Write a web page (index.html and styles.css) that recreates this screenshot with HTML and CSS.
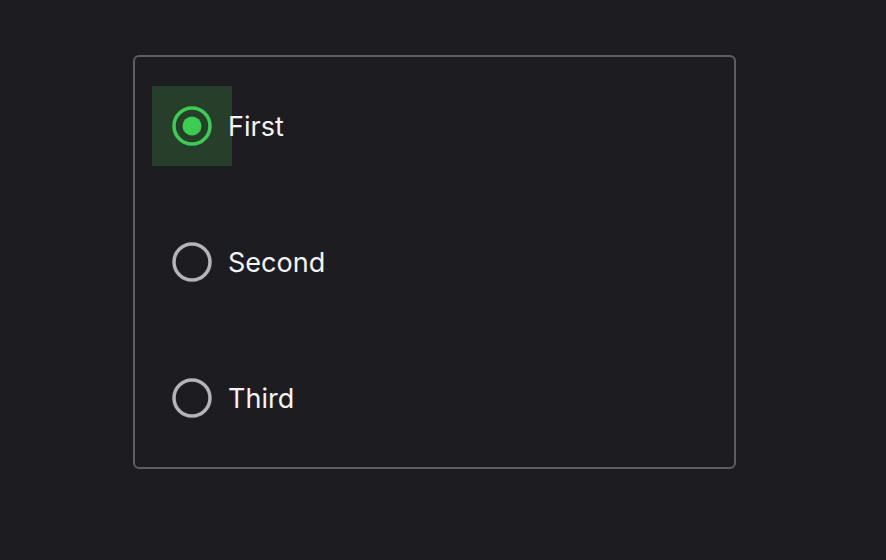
FILE: index.html
```html
<!DOCTYPE html>
<html>
<head>
<meta charset="utf-8">
<link rel="stylesheet" href="styles.css">
</head>
<body>
<div class="group">
  <label class="row">
    <span class="radio checked">
      <span class="halo"></span>
      <svg width="40" height="40" viewBox="0 0 40 40"><circle cx="20" cy="20" r="18" fill="none" stroke="#3dcc52" stroke-width="3.5"/><circle cx="20" cy="20" r="9.5" fill="#3dcc52"/></svg>
    </span>
    <span class="label">First</span>
  </label>
  <label class="row">
    <span class="radio">
      <svg width="40" height="40" viewBox="0 0 40 40"><circle cx="20" cy="20" r="18" fill="none" stroke="#b4b4b6" stroke-width="3.5"/></svg>
    </span>
    <span class="label">Second</span>
  </label>
  <label class="row">
    <span class="radio">
      <svg width="40" height="40" viewBox="0 0 40 40"><circle cx="20" cy="20" r="18" fill="none" stroke="#b4b4b6" stroke-width="3.5"/></svg>
    </span>
    <span class="label">Third</span>
  </label>
</div>
</body>
</html>
```
FILE: styles.css
```css
html, body {
  margin: 0;
  padding: 0;
  background: #1d1c21;
  font-family: Inter, "Noto Sans", sans-serif;
}
body {
  padding: 55px 0 0 133px;
}
.group {
  width: 599px;
  padding: 1px 0;
  border: 2px solid #5e5d62;
  border-radius: 6px;
  display: flex;
  flex-direction: column;
}
.row {
  height: 136px;
  display: flex;
  align-items: center;
  padding-left: 37px;
}
.radio {
  position: relative;
  width: 40px;
  height: 40px;
  display: flex;
  align-items: center;
  justify-content: center;
}
.radio svg {
  position: relative;
  display: block;
}
.halo {
  position: absolute;
  left: -20px;
  top: -20px;
  width: 80px;
  height: 80px;
  background: #263e2a;
}
.label {
  margin-left: 16px;
  color: #f4f4f6;
  font-size: 27px;
  position: relative;
}
```
